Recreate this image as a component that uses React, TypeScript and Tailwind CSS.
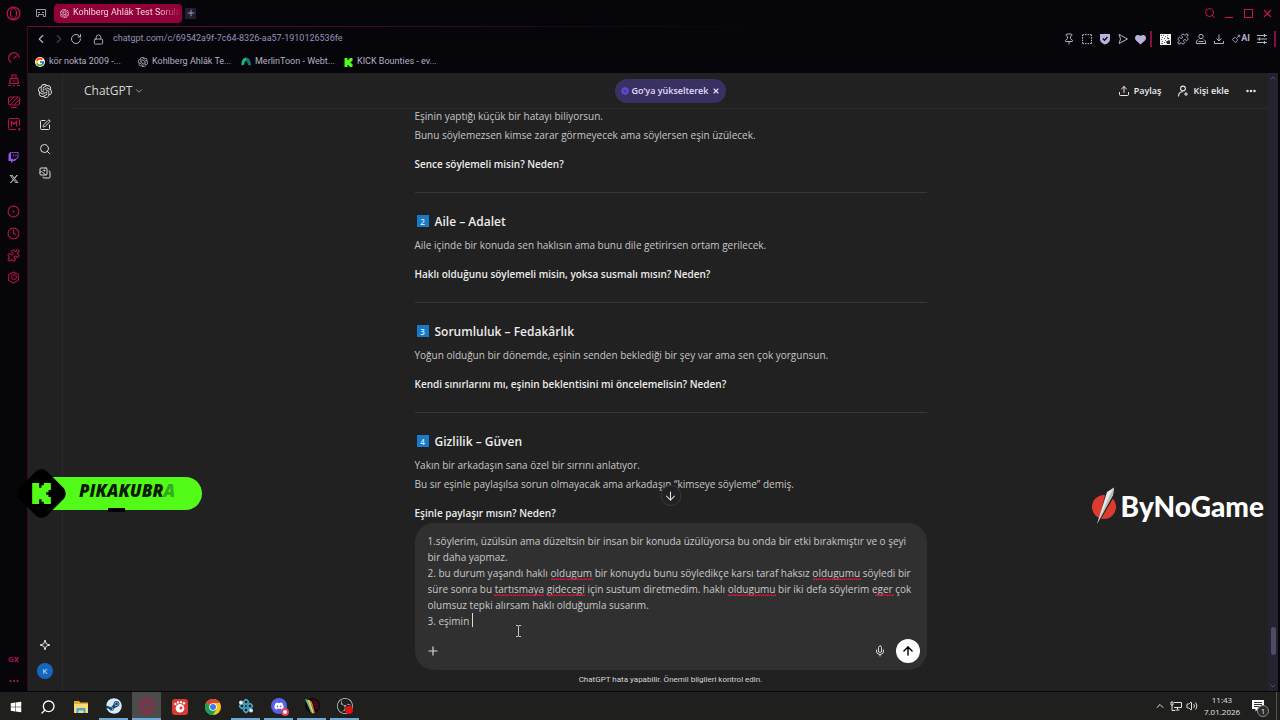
import React, { useState } from 'react';
import {
  ArrowDown,
  ArrowUp,
  ChevronDown,
  ChevronLeft,
  ChevronRight,
  ChevronUp,
  CircleDot,
  Clock,
  Ellipsis,
  Hexagon,
  Images,
  Lock,
  Mic,
  Pin,
  Plus,
  Puzzle,
  RotateCw,
  Search,
  SquareDashed,
  SquarePen,
  Upload,
  Volume2,
  X,
} from 'lucide-react';
import { FcGoogle } from 'react-icons/fc';
import { FaDiscord, FaHeart, FaSteam, FaTwitch, FaWindows, FaXTwitter } from 'react-icons/fa6';
import { SiObsstudio, SiOpenai } from 'react-icons/si';

interface Topic {
  number?: number;
  title?: string;
  lines: string[];
  question: string;
}

const topics: Topic[] = [
  {
    lines: [
      'Eşinin yaptığı küçük bir hatayı biliyorsun.',
      'Bunu söylemezsen kimse zarar görmeyecek ama söylersen eşin üzülecek.',
    ],
    question: 'Sence söylemeli misin? Neden?',
  },
  {
    number: 2,
    title: 'Aile – Adalet',
    lines: ['Aile içinde bir konuda sen haklısın ama bunu dile getirirsen ortam gerilecek.'],
    question: 'Haklı olduğunu söylemeli misin, yoksa susmalı mısın? Neden?',
  },
  {
    number: 3,
    title: 'Sorumluluk – Fedakârlık',
    lines: ['Yoğun olduğun bir dönemde, eşinin senden beklediği bir şey var ama sen çok yorgunsun.'],
    question: 'Kendi sınırlarını mı, eşinin beklentisini mi öncelemelisin? Neden?',
  },
  {
    number: 4,
    title: 'Gizlilik – Güven',
    lines: [
      'Yakın bir arkadaşın sana özel bir sırrını anlatıyor.',
      'Bu sır eşinle paylaşılsa sorun olmayacak ama arkadaşın “kimseye söyleme” demiş.',
    ],
    question: 'Eşinle paylaşır mısın? Neden?',
  },
];

const initialDraft = `1.söylerim, üzülsün ama düzeltsin bir insan bir konuda üzülüyorsa bu onda bir etki bırakmıştır ve o şeyi bir daha yapmaz.
2. bu durum yaşandı haklı oldugum bir konuydu bunu söyledikçe karsı taraf haksız oldugumu söyledi bir süre sonra bu tartısmaya gidecegi için sustum diretmedim. haklı oldugumu bir iki defa söylerim eger çok olumsuz tepki alırsam haklı olduğumla susarım.
3. eşimin `;

// line index and horizontal extent of each misspelled word in the draft
const spellingMarks = [
  { line: 2, left: 123, width: 42 },
  { line: 2, left: 385, width: 48 },
  { line: 3, left: 66, width: 50 },
  { line: 3, left: 119, width: 38 },
  { line: 3, left: 300, width: 48 },
  { line: 3, left: 447, width: 19 },
];

const OperaLogo = ({ className }: { className?: string }) => (
  <svg viewBox="0 0 16 16" fill="none" stroke="currentColor" className={className}>
    <circle cx="8" cy="8" r="6.8" strokeWidth="1.5" />
    <ellipse cx="8" cy="8" rx="3.2" ry="5.6" strokeWidth="1.3" />
  </svg>
);

const KickMark = ({ className }: { className?: string }) => (
  <svg viewBox="0 0 8 9" fill="currentColor" className={className}>
    <path d="M0 0h3v2h1V1h1V0h3v3H7v1H6v1h1v1h1v3H5V8H4V7H3v2H0z" />
  </svg>
);

const GaugeMark = () => (
  <svg viewBox="0 0 14 14" fill="none" stroke="currentColor" strokeWidth="1.2" className="size-3.5">
    <path d="M4.2 11.5A5.3 5.3 0 1 1 12.3 7" />
    <path d="M6.5 7.5L10 4.5" />
  </svg>
);

const CleanerMark = () => (
  <svg viewBox="0 0 14 14" fill="none" stroke="currentColor" strokeWidth="1.2" className="size-3.5">
    <path d="M5 5V2h4v3M3.5 5.5h7l1 5h-9zM1 12.5h3M6 12.5h2M10 12.5h3M5.5 8h3" />
  </svg>
);

const MonitorStripes = () => (
  <svg viewBox="0 0 14 14" fill="none" stroke="currentColor" className="size-3.5">
    <rect x="1.5" y="2" width="11" height="8" rx="1" />
    <path d="M2 7l5-5M3 10l8-8M7 10l5-5M4 12.5h6" />
  </svg>
);

const ModSquare = () => (
  <svg viewBox="0 0 14 14" fill="none" stroke="currentColor" className="size-3.5">
    <path d="M12.5 9V2.5a1 1 0 0 0-1-1h-9a1 1 0 0 0-1 1v9a1 1 0 0 0 1 1H9" />
    <path d="M4.5 9.5v-5L7 7l2.5-2.5v5M11 12.5h1.5V11" strokeWidth="1.3" />
  </svg>
);

const SettingsHex = () => (
  <span className="relative flex size-[13px] items-center justify-center">
    <Hexagon className="absolute size-[13px]" strokeWidth={2} />
    <span className="size-1.5 rounded-full border border-current" />
  </span>
);

const MerlinMark = () => (
  <svg viewBox="0 0 10 10" className="size-2.5">
    <path d="M.5 8.5C.2 3 2.5.7 5 .7S9.8 3 9.5 8.5L7 7.5C7 5 6 4 5 4S3.2 5 3.3 7.500z" fill="#1fb584" />
    <path d="M5 .7C7.5.7 9.8 3 9.5 8.5L7 7.5C7 5 6 4 5 4z" fill="#0c7f6c" />
  </svg>
);

const ChromeMark = () => (
  <svg viewBox="0 0 16 16" className="size-4">
    <circle cx="8" cy="8" r="8" fill="#f6c71b" />
    <path d="M1.07 4A8 8 0 0 0 8 16l3.46-6L8 8z" fill="#1c9e56" />
    <path d="M8 8L1.07 4A8 8 0 0 1 14.93 4H8z" fill="#db4437" />
    <circle cx="8" cy="8" r="3.8" fill="#fff" />
    <circle cx="8" cy="8" r="3" fill="#3f7de8" />
  </svg>
);

const FolderMark = () => (
  <svg viewBox="0 0 16 14" className="h-3.5 w-4">
    <path d="M1 1h5l1.5 1.5H15V13H1z" fill="#e3ac31" />
    <path d="M1 4h14v9H1z" fill="#fadc74" />
    <path d="M3.5 8h9v5h-2v-2.500h-5V13h-2z" fill="#4aa5dc" />
  </svg>
);

const GomMark = () => (
  <svg viewBox="0 0 16 16" className="size-4">
    <rect width="16" height="16" rx="3" fill="#d93a35" />
    <circle cx="8" cy="9.3" r="4.3" fill="#fff" />
    <circle cx="9" cy="9" r="1.5" fill="#d93a35" />
    <circle cx="3.3" cy="5" r="1.2" fill="#fff" />
    <circle cx="6" cy="3.4" r="1.2" fill="#fff" />
    <circle cx="9" cy="3.2" r="1.2" fill="#fff" />
    <circle cx="12" cy="4.3" r="1.2" fill="#fff" />
  </svg>
);

const NodesMark = () => (
  <svg viewBox="0 0 16 16" className="size-4">
    <g fill="none" stroke="#4aa9cf" strokeWidth="1.6">
      <rect x="6" y="2" width="4" height="4" rx="1" transform="rotate(45 8 4)" />
      <rect x="6" y="10" width="4" height="4" rx="1" transform="rotate(45 8 12)" />
      <rect x="2" y="6" width="4" height="4" rx="1" transform="rotate(45 4 8)" />
      <rect x="10" y="6" width="4" height="4" rx="1" transform="rotate(45 12 8)" />
    </g>
    <circle cx="3" cy="4.5" r="2" fill="#dfe9ee" />
    <circle cx="13" cy="12.5" r="2" fill="#dfe9ee" />
  </svg>
);

const FeatherMark = () => (
  <svg viewBox="0 0 16 16" className="size-4">
    <circle cx="8.5" cy="7.5" r="7.5" fill="#120509" />
    <path d="M1 1l3 1 5 13-2-.5z" fill="#4bbf8c" />
    <path d="M3.5 1.5L6 2.5 10 15l-1.5.5z" fill="#e8d65a" />
    <path d="M6 2.5L8 4l3 11H9.8z" fill="#e0733a" />
    <path d="M8 1a7 7 0 0 1 7 8L12 13z" fill="#3a0d1b" />
  </svg>
);

const QrMark = () => (
  <svg viewBox="0 0 11 11" className="size-[11px]" shapeRendering="crispEdges">
    <rect width="11" height="11" fill="#f2f2f2" />
    <path
      d="M1 1h1v1H1zM3 1h1v1H3zM5 2h1v1H5zM7 1h1v1H7zM2 3h1v1H2zM4 4h1v1H4zM7 3h1v2H7zM1 5h1v1H1zM5 6h1v1H5zM2 7h1v1H2zM4 8h1v1H4zM8 6h2v1H8zM6 7h2v2H6zM8 8h2v2H8zM1 9h2v1H1z"
      fill="#777"
    />
    <path d="M7 7h3v3H7zM8 4h1v1H8z" fill="#222" />
  </svg>
);

const ShieldMark = () => (
  <svg viewBox="0 0 12 12" className="size-3">
    <path d="M1 1h10v5.5C11 9 8.5 10.5 6 11.5 3.5 10.5 1 9 1 6.5z" fill="#b9b3dc" />
    <path d="M3.8 5.5l1.7 1.7 3-3.2" fill="none" stroke="#0b0a12" strokeWidth="1.4" />
  </svg>
);

const FlowMark = () => (
  <svg viewBox="0 0 12 12" fill="none" stroke="currentColor" strokeLinejoin="round" className="size-3">
    <path d="M2 1.5L10.5 6 2 10.5 3.5 6z" />
  </svg>
);

const ProfileMark = () => (
  <svg viewBox="0 0 12 12" fill="none" stroke="currentColor" className="size-3">
    <circle cx="6" cy="3.5" r="2.2" />
    <path d="M3.5 6.5c-1.5.5-2.2 1.5-2.2 4h9.4c0-2.5-.7-3.5-2.2-4M3.5 8.5h5" />
  </svg>
);

const DownloadMark = () => (
  <svg viewBox="0 0 12 12" fill="none" stroke="currentColor" className="size-3">
    <path d="M6 1.5V8M3.5 5.5L6 8l2.5-2.5M1.5 8v2.5h9V8" />
  </svg>
);

const AddPersonMark = () => (
  <svg viewBox="0 0 12 12" fill="none" stroke="currentColor" strokeWidth="1.1" strokeLinecap="round" className="size-3">
    <circle cx="6" cy="3.5" r="2.4" />
    <path d="M1.5 11c.2-2.6 1.8-4 4-4.2M9 7.5v3M7.5 9h3" />
  </svg>
);

const AiMark = () => (
  <svg viewBox="0 0 12 12" fill="none" stroke="currentColor" className="size-2.5">
    <path d="M1.5 6.5L5 4l3 3-2.5 3.5zM7 5l3.5-3.5M8 1.5h2.5V4" />
  </svg>
);

const MenuLines = () => (
  <svg viewBox="0 0 12 12" fill="none" stroke="currentColor" strokeWidth="1.2" className="size-3">
    <path d="M1 2.5h10M1 6h10M1 9.5h10M8.5 1v3M3.5 4.5v3M8.5 8v3" />
  </svg>
);

const sidebarTop = [
  { label: 'GX Control', icon: <GaugeMark /> },
  { label: 'GX Cleaner', icon: <CleanerMark /> },
  { label: 'Live wallpaper', icon: <MonitorStripes /> },
  { label: 'GX Mods', icon: <ModSquare /> },
];

const sidebarBottom = [
  { label: 'Player', icon: <CircleDot className="size-[13px]" strokeWidth={2} /> },
  { label: 'History', icon: <Clock className="size-[13px]" strokeWidth={2} /> },
  { label: 'Extensions', icon: <Puzzle className="size-[13px]" strokeWidth={2} /> },
  { label: 'Settings', icon: <SettingsHex /> },
];

const bookmarks = [
  { text: 'kör nokta 2009 -...', icon: <FcGoogle className="size-2.5 rounded-full bg-white" /> },
  { text: 'Kohlberg Ahlâk Te...', icon: <SiOpenai className="size-2.5" /> },
  { text: 'MerlinToon - Webt...', icon: <MerlinMark /> },
  { text: 'KICK Bounties - ev...', icon: <KickMark className="size-[9px] text-[#4dfc1a]" /> },
];

const GxSidebar: React.FC = () => (
  <aside className="flex w-[27px] shrink-0 flex-col items-center text-[#b8124c]">
    <button aria-label="Opera" className="mt-1.5 flex h-3.5 items-center">
      <OperaLogo className="size-[15px]" />
    </button>
    <div className="mt-[27px] flex flex-col">
      {sidebarTop.map((item) => (
        <button key={item.label} aria-label={item.label} className="flex h-[22px] items-center justify-center">
          {item.icon}
        </button>
      ))}
    </div>
    <div className="mt-[11px] flex flex-col">
      <button aria-label="Twitch" className="flex h-[22px] items-center justify-center text-[#9a55f2]">
        <FaTwitch className="size-[11px]" />
      </button>
      <button aria-label="X" className="flex h-[22px] items-center justify-center text-[#c4c4c4]">
        <FaXTwitter className="size-2.5" />
      </button>
    </div>
    <div className="mt-2.5 flex flex-col">
      {sidebarBottom.map((item) => (
        <button key={item.label} aria-label={item.label} className="flex h-[22px] items-center justify-center">
          {item.icon}
        </button>
      ))}
    </div>
    <div className="mt-auto flex flex-col items-center">
      <button className="h-[22px] text-[8px] font-bold">GX</button>
      <button aria-label="More" className="flex h-5 items-center">
        <Ellipsis className="size-3" strokeWidth={2.5} />
      </button>
    </div>
  </aside>
);

const TabBar: React.FC = () => (
  <div className="flex h-[26px] shrink-0 items-center pr-1.5 pl-2">
    <button aria-label="Tab islands" className="text-[#9a9aa8]">
      <svg viewBox="0 0 12 10" fill="none" stroke="currentColor" className="h-2.5 w-3">
        <path d="M1.5 1.5h9v7h-2v-2h-5v2h-2zM3 4.500h2M7 4.500h2" />
      </svg>
    </button>
    <button className="ml-[7px] flex h-[19px] w-32 items-center gap-1 rounded-sm bg-[#910038] pl-1.5 text-[9px] text-[#f0d3de]">
      <SiOpenai className="size-[9px] shrink-0" />
      <span className="mask-r-from-80% whitespace-nowrap">Kohlberg Ahlâk Test Sorula</span>
    </button>
    <button aria-label="New tab" className="ml-[3px] flex size-[11px] items-center justify-center bg-[#251b33] text-[#b5adc8]">
      <Plus className="size-2.5" />
    </button>
    <div className="ml-auto flex items-center gap-[7px] text-[#c9144f]">
      <button aria-label="Search tabs"><Search className="size-3" /></button>
      <button aria-label="Minimize" className="flex h-3 w-3 items-end justify-center pb-px">
        <span className="h-px w-2 bg-current" />
      </button>
      <button aria-label="Maximize" className="flex size-3 items-center justify-center">
        <span className="size-[9px] border border-current" />
      </button>
      <button aria-label="Close"><X className="size-[13px]" /></button>
    </div>
  </div>
);

const AddressBar: React.FC = () => (
  <div className="flex h-6 items-center pr-0.5 pl-1.5 text-[#b4b1c2]">
    <div className="flex items-center gap-1">
      <button aria-label="Back"><ChevronLeft className="size-3.5" /></button>
      <button aria-label="Forward" className="text-[#454352]"><ChevronRight className="size-3.5" /></button>
      <button aria-label="Reload"><RotateCw className="size-3" /></button>
    </div>
    <Lock className="ml-[11px] size-[11px]" />
    <input
      aria-label="Address"
      defaultValue="chatgpt.com/c/69542a9f-7c64-8326-aa57-1910126536fe"
      className="ml-[9px] min-w-0 flex-1 bg-transparent text-[9px] text-[#9692b8] outline-none"
    />
    <div className="flex items-center gap-1.5">
      <button aria-label="Pin"><Pin className="size-3" /></button>
      <button aria-label="Snapshot"><SquareDashed className="size-3" strokeWidth={2.5} /></button>
      <button aria-label="Tracker blocker"><ShieldMark /></button>
      <button aria-label="My Flow"><FlowMark /></button>
      <button aria-label="Favourites" className="text-[#b9b3dc]"><FaHeart className="size-[11px]" /></button>
      <span className="mr-0.5 -ml-0.5 h-4 w-0.5 bg-[#8a0f3d]" />
      <button aria-label="QR code"><QrMark /></button>
      <button aria-label="Extensions"><Puzzle className="size-3" /></button>
      <button aria-label="Profile"><ProfileMark /></button>
      <button aria-label="Downloads"><DownloadMark /></button>
      <button className="flex items-center text-[9px] font-bold">
        <AiMark />AI
      </button>
      <button aria-label="Easy setup"><MenuLines /></button>
      <span className="h-4 w-0.5 bg-[#8a0f3d]" />
    </div>
  </div>
);

const BookmarkBar: React.FC = () => (
  <nav className="flex h-[22px] items-center pl-[7px] text-[9px] text-[#b4b1c2]">
    {bookmarks.map((bookmark) => (
      <a key={bookmark.text} href="#" className="flex w-[103px] items-center gap-1 whitespace-nowrap">
        <span className="flex shrink-0">{bookmark.icon}</span>
        {bookmark.text}
      </a>
    ))}
  </nav>
);

const ChatRail: React.FC = () => (
  <aside className="flex w-[35px] shrink-0 flex-col items-center border-r border-[#292929] pt-[11px] text-[#dedede]">
    <a href="#" aria-label="ChatGPT"><SiOpenai className="size-3.5" /></a>
    <div className="mt-[21px] flex flex-col gap-3">
      <button aria-label="Yeni sohbet"><SquarePen className="size-3" /></button>
      <button aria-label="Sohbetlerde ara"><Search className="size-3" /></button>
      <button aria-label="Kitaplık"><Images className="size-3 -scale-x-100" /></button>
    </div>
    <div className="mt-auto mb-3 flex flex-col items-center gap-3">
      <button aria-label="Yükselt">
        <svg viewBox="0 0 12 12" fill="none" stroke="currentColor" className="size-3">
          <path d="M6 1l1.2 3.8L11 6 7.2 7.2 6 11 4.8 7.2 1 6l3.8-1.2z" />
        </svg>
      </button>
      <button className="size-4 rounded-full bg-[#1467c0] text-[8px] text-[#dbe9f8]">K</button>
    </div>
  </aside>
);

const ChatHeader: React.FC = () => (
  <header className="grid h-9 shrink-0 grid-cols-[1fr_auto_1fr] items-center border-b border-[#2b2b2b] px-[11px]">
    <button className="flex items-center gap-0.5 justify-self-start text-[12px] text-[#d6d6d6]">
      ChatGPT <ChevronDown className="size-2.5 text-[#b0b0b0]" />
    </button>
    <div className="flex h-6 items-center gap-1 rounded-full bg-[#3a3163] px-1.5 text-[9px] font-semibold text-[#e2dcfa]">
      <button className="flex items-center gap-[3px]">
        <svg viewBox="0 0 8 8" className="size-2">
          <path d="M4 0l2.8 1.2L8 4 6.8 6.8 4 8 1.2 6.8 0 4l1.2-2.8z" fill="#5e4bd0" />
          <path d="M4 2v4M2 4h4" stroke="#44369c" />
        </svg>
        Go’ya yükselterek
      </button>
      <button aria-label="Kapat"><X className="size-2" strokeWidth={3.5} /></button>
    </div>
    <div className="flex items-center gap-4 justify-self-end text-[9px] font-semibold text-[#ececec]">
      <button className="flex items-center gap-1"><Upload className="size-3" />Paylaş</button>
      <button className="flex items-center gap-1"><AddPersonMark />Kişi ekle</button>
      <button aria-label="Diğer"><Ellipsis className="size-3" strokeWidth={3} /></button>
    </div>
  </header>
);

const Message: React.FC = () => (
  <article className="mx-auto w-full max-w-[512px] text-[10px] leading-[19px] text-[#c6c6c6]">
    {topics.map((topic) => (
      <section key={topic.question}>
        {topic.title && (
          <>
            <hr className="my-[18px] border-[#363636]" />
            <h3 className="mb-[5px] flex h-5 items-center gap-1.5 text-[12px] font-semibold text-[#ececec]">
              <span className="ml-0.5 flex size-3 items-center justify-center bg-[#1a7ac6] text-[8px] text-[#d7ecfb]">
                {topic.number}
              </span>
              {topic.title}
            </h3>
          </>
        )}
        {topic.lines.map((line) => (
          <p key={line}>{line}</p>
        ))}
        <p className="mt-2.5 font-semibold text-[#ececec]">{topic.question}</p>
      </section>
    ))}
  </article>
);

const Composer: React.FC = () => {
  const [draft, setDraft] = useState(initialDraft);
  const pristine = draft === initialDraft;

  return (
    <form className="relative mx-auto w-full max-w-[512px] rounded-[19px] bg-[#303030] pb-[7px]">
      <button
        type="button"
        aria-label="En alta kaydır"
        className="absolute -top-[38px] left-1/2 flex size-[21px] -translate-x-1/2 items-center justify-center rounded-full border border-[#3a3a3a] bg-[#212121] text-[#e6e6e6]"
      >
        <ArrowDown className="size-3.5" strokeWidth={1.8} />
      </button>

      <div className="relative mt-2.5 mr-3 ml-[13px] text-[10px] leading-4">
        <textarea
          aria-label="Mesaj"
          rows={6}
          spellCheck={false}
          value={draft}
          onChange={(e) => setDraft(e.target.value)}
          className="block w-full resize-none overflow-hidden bg-transparent text-[#c9c9c9] outline-none"
        />
        {pristine &&
          spellingMarks.map((mark) => (
            <span
              key={`${mark.line}-${mark.left}`}
              className="pointer-events-none absolute h-0.5 border-b border-dotted border-[#e01b3f] bg-[#b51233]/60"
              style={{ top: mark.line * 16 + 13, left: mark.left, width: mark.width }}
            />
          ))}
        {pristine && <span className="absolute bottom-0.5 left-11 h-3.5 w-px bg-[#dcdcdc]" />}
      </div>

      <div className="mt-2.5 flex items-center pr-[7px] pl-[11px] text-[#d8d8d8]">
        <button type="button" aria-label="Ekle"><Plus className="size-3.5" strokeWidth={2} /></button>
        <button type="button" aria-label="Dikte" className="ml-auto"><Mic className="size-3" strokeWidth={2} /></button>
        <button type="button" aria-label="Gönder" className="ml-2.5 flex size-6 items-center justify-center rounded-full bg-white text-black">
          <ArrowUp className="size-3.5" strokeWidth={2.5} />
        </button>
      </div>

      {/* mouse pointer */}
      <svg viewBox="0 0 7 12" fill="none" stroke="#c4c4c4" className="absolute top-[102px] left-[100px] h-3 w-[7px]">
        <path d="M1 .5h2l.5.5.5-.5h2M3.5 1v10M1 11.5h2l.5-.5.5.5h2" />
      </svg>
    </form>
  );
};

const Scrollbar: React.FC = () => (
  <div className="flex w-2.5 shrink-0 flex-col items-center bg-[#232230] py-px text-[#6d6b80]">
    <ChevronUp className="size-2" />
    <div className="mt-auto mb-[27px] h-7 w-[5px] rounded-sm bg-[#4d4b66]" />
    <ChevronDown className="size-2" />
  </div>
);

const KickBadge: React.FC = () => (
  <div className="absolute top-[467px] left-[15px] flex items-center">
    <div className="relative z-10 flex size-[52px] items-center justify-center">
      <span className="absolute size-[39px] rotate-45 rounded-lg bg-black" />
      <KickMark className="relative h-[21px] w-[19px] text-[#53fc18]" />
    </div>
    <div className="relative -ml-5 flex h-[33px] w-[155px] items-center rounded-r-full bg-[#53fc18] pb-1 pl-8 font-['Open_Sans',sans-serif] text-[17px] font-extrabold text-[#071a03] italic">
      PIKAKUBR<span className="text-[#2eaf18]">A</span>
      <span className="absolute bottom-[-2px] left-[61px] h-1 w-[17px] bg-black" />
    </div>
  </div>
);

const ByNoGameLogo: React.FC = () => (
  <div className="absolute top-[486px] right-4 flex items-center gap-1">
    <svg viewBox="0 0 26 38" className="h-[38px] w-[26px]">
      <circle cx="13" cy="20" r="12" fill="#dc3c2e" />
      <path d="M15 4l9-4v8L7 37z" fill="#212121" />
      <path d="M16 5L23 .5 22 8 6 37z" fill="#e8e8e8" />
      <path d="M23 .5L22 8 6 37 19 8z" fill="#b8b8b8" />
    </svg>
    <span className="font-['Lato',sans-serif] text-[28px] leading-[40px] font-black text-white">ByNoGame</span>
  </div>
);

const taskbarApps = [
  { label: 'Başlat', icon: <FaWindows className="size-3" />, tile: '' },
  { label: 'Ara', icon: <Search className="size-4 -scale-x-100" />, tile: '' },
  { label: 'Dosya Gezgini', icon: <FolderMark />, tile: '' },
  { label: 'Steam', icon: <FaSteam className="size-4 rounded-full bg-[#12497c] text-[#dfe8f0]" />, tile: 'border-b-2 border-[#6fa8d6]' },
  { label: 'Opera GX', icon: <OperaLogo className="size-4 text-[#a6224c]" />, tile: 'border-b-2 border-[#6fa8d6] bg-[#4c4c4b]' },
  { label: 'GOM', icon: <GomMark />, tile: '' },
  { label: 'Chrome', icon: <ChromeMark />, tile: '' },
  { label: 'Nodes', icon: <NodesMark />, tile: 'border-b-2 border-[#6fa8d6]' },
  {
    label: 'Discord',
    icon: (
      <span className="relative flex size-4 items-center justify-center rounded-full bg-[#5661e8] text-white">
        <FaDiscord className="size-2.5" />
        <span className="absolute -right-0.5 -bottom-0.5 size-2 rounded-full border-2 border-[#e0405e] bg-white" />
      </span>
    ),
    tile: 'border-b-2 border-[#6fa8d6]',
  },
  { label: 'Feather', icon: <FeatherMark />, tile: 'border-b-2 border-[#6fa8d6]' },
  {
    label: 'OBS',
    icon: (
      <span className="relative text-[#c9c9c9]">
        <SiObsstudio className="size-4" />
        <span className="absolute right-0 bottom-0 size-2 rounded-full bg-[#e01212]" />
      </span>
    ),
    tile: 'border-b-2 border-[#6fa8d6]',
  },
];

const Taskbar: React.FC = () => (
  <footer className="flex h-7 shrink-0 items-stretch bg-[#1f1f1d] font-['Open_Sans',sans-serif] text-white">
    {taskbarApps.map((app) => (
      <button key={app.label} aria-label={app.label} className="flex w-[33px] items-stretch justify-center px-0.5 first:w-[31px]">
        <span className={`flex flex-1 items-center justify-center pt-0.5 ${app.tile}`}>{app.icon}</span>
      </button>
    ))}
    <div className="ml-auto flex items-center text-[#e2e2e2]">
      <div className="flex items-center gap-1">
        <ChevronUp className="size-3" />
        <svg viewBox="0 0 12 12" fill="none" stroke="currentColor" className="size-3">
          <path d="M4 2.5h7.5v5H4M1 2h2v3H1zM2 5v5.5h3M7.5 7.5v2M5.5 10h4" />
        </svg>
        <Volume2 className="size-3" />
      </div>
      <time className="ml-1 flex w-10 flex-col items-center text-[8px] leading-3">
        <span>11:43</span>
        <span>7.01.2026</span>
      </time>
      <button aria-label="Bildirimler" className="relative ml-2.5 flex h-7 w-6 items-center">
        <svg viewBox="0 0 12 12" className="size-3">
          <path d="M0 0h12v9H6l-2.5 2.5V9H0z" fill="#fff" />
          <path d="M2 2.5h8M2 4.5h8M2 6.5h5" stroke="#333" />
        </svg>
        <span className="absolute right-[7px] bottom-[3px] flex size-3 items-center justify-center rounded-full border border-[#8a8a8a] bg-[#2c2c2c] text-[8px]">
          1
        </span>
      </button>
      <span className="mr-[3px] h-full w-px bg-[#55554f]" />
    </div>
  </footer>
);

const App: React.FC = () => {
  return (
    <div className="relative flex h-screen flex-col overflow-hidden bg-[#06050a] font-['Roboto',sans-serif]">
      <div className="flex min-h-0 flex-1 pb-px">
        <GxSidebar />
        <div className="flex min-w-0 flex-1 flex-col">
          <TabBar />
          <div className="flex min-h-0 flex-1 flex-col border-l border-[#3b0a1f] pr-0.5">
            <div className="h-px shrink-0 bg-linear-to-r from-[#6b0d35] to-transparent to-60%" />
            <AddressBar />
            <BookmarkBar />
            <div className="flex min-h-0 flex-1 bg-[#212121] font-['Open_Sans',sans-serif]">
              <ChatRail />
              <main className="flex min-w-0 flex-1 flex-col pl-2.5">
                <ChatHeader />
                <div className="flex min-h-0 flex-1 flex-col justify-end overflow-hidden">
                  <Message />
                </div>
                <Composer />
                <p className="h-[21px] shrink-0 text-center font-['Roboto',sans-serif] text-[8px] leading-5 text-[#d5d5d5]">
                  ChatGPT hata yapabilir. Önemli bilgileri kontrol edin.
                </p>
              </main>
              <Scrollbar />
            </div>
          </div>
        </div>
      </div>
      <Taskbar />
      <KickBadge />
      <ByNoGameLogo />
    </div>
  );
};

export default App;
